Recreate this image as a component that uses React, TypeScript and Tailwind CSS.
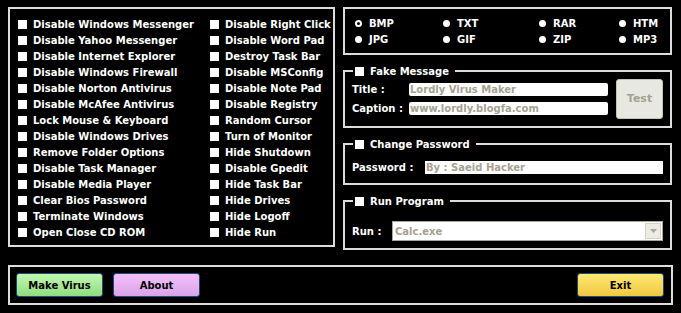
import React from "react";

const leftItems = [
  "Disable Windows Messenger",
  "Disable Yahoo Messenger",
  "Disable Internet Explorer",
  "Disable Windows Firewall",
  "Disable Norton Antivirus",
  "Disable McAfee Antivirus",
  "Lock Mouse & Keyboard",
  "Disable Windows Drives",
  "Remove Folder Options",
  "Disable Task Manager",
  "Disable Media Player",
  "Clear Bios Password",
  "Terminate Windows",
  "Open Close CD ROM",
];

const rightItems = [
  "Disable Right Click",
  "Disable Word Pad",
  "Destroy Task Bar",
  "Disable MSConfig",
  "Disable Note Pad",
  "Disable Registry",
  "Random Cursor",
  "Turn of Monitor",
  "Hide Shutdown",
  "Disable Gpedit",
  "Hide Task Bar",
  "Hide Drives",
  "Hide Logoff",
  "Hide Run",
];

const formats = ["BMP", "TXT", "RAR", "HTM", "JPG", "GIF", "ZIP", "MP3"];

function Box() {
  return <span className="inline-block size-[9px] shrink-0 bg-white" />;
}

function Option({ label }: { label: string }) {
  return (
    <div className="flex h-4 items-center gap-[6px]">
      <Box />
      <span>{label}</span>
    </div>
  );
}

function Group({ title, children }: { title: string; children: React.ReactNode }) {
  return (
    <fieldset className="border-2 border-[#dcdcdc] px-[7px]">
      <legend className="ml-[1px] flex h-[14px] items-center gap-[6px] px-[2px] pr-[6px]">
        <Box />
        <span>{title}</span>
      </legend>
      {children}
    </fieldset>
  );
}

export default function App() {
  return (
    <div
      className="flex h-[313px] w-[681px] flex-col gap-[15px] bg-black px-[8px] pt-[7px] text-[10px] font-bold text-white"
      style={{ fontFamily: '"DejaVu Sans", Tahoma, sans-serif' }}
    >
      <div className="flex gap-[8px]">
        <div className="grid h-[240px] w-[327px] grid-cols-[192px_1fr] border-2 border-[#dcdcdc] pl-[8px] pt-[7px]">
          <div>
            {leftItems.map((item) => (
              <Option key={item} label={item} />
            ))}
          </div>
          <div>
            {rightItems.map((item) => (
              <Option key={item} label={item} />
            ))}
          </div>
        </div>

        <div className="flex w-[329px] flex-col gap-[9px]">
          <div className="grid h-[48px] grid-cols-[88px_96px_80px_1fr] content-center border-2 border-[#dcdcdc] pl-[10px]">
            {formats.map((f, i) => (
              <div key={f} className="flex h-4 items-center gap-[7px]">
                {i === 0 ? (
                  <span className="size-[7px] rounded-full border-[2px] border-white" />
                ) : (
                  <span className="size-[7px] rounded-full bg-white" />
                )}
                <span>{f}</span>
              </div>
            ))}
          </div>

          <Group title="Fake Message">
            <div className="flex items-center justify-between pb-[7px] pt-[1px]">
              <div className="flex flex-col gap-[4px]">
                <div className="flex items-center">
                  <span className="w-[57px]">Title :</span>
                  <div className="h-[13px] w-[199px] rounded-[2px] bg-white px-[1px] leading-[13px] text-[#a4a290]">
                    Lordly Virus Maker
                  </div>
                </div>
                <div className="flex items-center">
                  <span className="w-[57px]">Caption :</span>
                  <div className="h-[13px] w-[199px] rounded-[2px] bg-white px-[1px] leading-[13px] text-[#a4a290]">
                    www.lordly.blogfa.com
                  </div>
                </div>
              </div>
              <button className="flex h-[40px] w-[47px] items-center justify-center rounded-[3px] border border-[#c4c2b4] bg-[#e8e8e2] text-[11px] text-[#a4a290]">
                Test
              </button>
            </div>
          </Group>

          <Group title="Change Password">
            <div className="flex items-center pb-[8px] pt-[9px]">
              <span className="w-[73px]">Password :</span>
              <div className="h-[13px] w-[238px] bg-white px-[1px] leading-[13px] text-[#a4a290]">
                By : Saeid Hacker
              </div>
            </div>
          </Group>

          <Group title="Run Program">
            <div className="flex items-center pb-[7px] pt-[13px]">
              <span className="w-[40px]">Run :</span>
              <div className="flex h-[20px] w-[271px] items-center justify-between border border-[#a8a698] bg-white pl-[2px] pr-[1px] text-[#a4a290]">
                <span>Calc.exe</span>
                <span className="flex h-[16px] w-[16px] items-center justify-center border border-[#d4d2c6] bg-[#ecebe4]">
                  <svg width="7" height="4" viewBox="0 0 7 4">
                    <path d="M0 0h7L3.5 4z" fill="#a8a698" />
                  </svg>
                </span>
              </div>
            </div>
          </Group>
        </div>
      </div>

      <div className="flex h-[40px] w-[665px] items-center justify-between border-2 border-[#dcdcdc] pl-[6px] pr-[7px]">
        <div className="flex gap-[10px]">
          <button className="h-[24px] w-[87px] rounded-[3px] border border-[#1c4a78] bg-gradient-to-b from-[#c0f8b0] to-[#90dc80] text-[10px] text-black">
            Make Virus
          </button>
          <button className="h-[24px] w-[87px] rounded-[3px] border border-[#1c4a78] bg-gradient-to-b from-[#f4c0fa] to-[#d8a4e8] text-[10px] text-black">
            About
          </button>
        </div>
        <button className="h-[24px] w-[87px] rounded-[3px] border border-[#1c4a78] bg-gradient-to-b from-[#ffe870] to-[#f0c840] text-[10px] text-black">
          Exit
        </button>
      </div>
    </div>
  );
}
